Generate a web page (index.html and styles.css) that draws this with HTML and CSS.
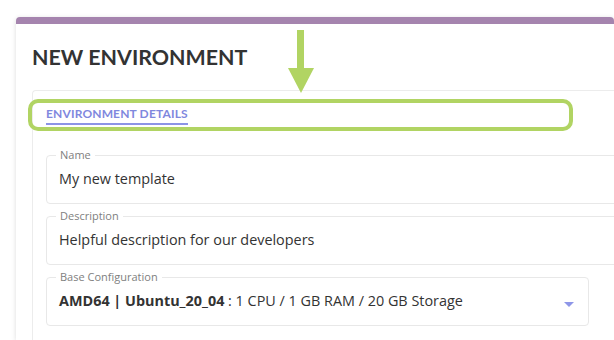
FILE: index.html
```html
<!DOCTYPE html>
<html lang="en">
<head>
  <meta charset="UTF-8" />
  <meta name="viewport" content="width=device-width, initial-scale=1.0"/>
  <title>New Environment</title>
  <link rel="stylesheet" href="styles.css">
</head>
<body>
  <div class="card">
    <h1>NEW ENVIRONMENT</h1>

    <div class="panel">
      <div class="tabs">
        <span class="tab active">ENVIRONMENT DETAILS</span>
      </div>

      <fieldset class="field">
        <legend>Name</legend>
        <div class="value">My new template</div>
      </fieldset>

      <fieldset class="field">
        <legend>Description</legend>
        <div class="value">Helpful description for our developers</div>
      </fieldset>

      <fieldset class="field select">
        <legend>Base Configuration</legend>
        <div class="value"><b>AMD64 | Ubuntu_20_04</b> : 1 CPU / 1 GB RAM / 20 GB Storage</div>
        <span class="caret"></span>
      </fieldset>
    </div>

    <!-- annotation overlay -->
    <div class="highlight"></div>
    <svg class="pointer" width="28" height="64" viewBox="0 0 28 64">
      <rect x="10" y="0" width="7" height="40" fill="#b1d463"/>
      <polygon points="1,38 27,38 14,63" fill="#b1d463"/>
    </svg>
  </div>
</body>
</html>
```

FILE: styles.css
```css
body {
  margin: 0;
  padding: 17px 0 0 16px;
  background: #fff;
  overflow: hidden;
  font-family: 'Open Sans', sans-serif;
  color: #333;
}

.card {
  position: relative;
  width: 598px;
  height: 323px;
  overflow: hidden;
  border-top: 7px solid #a584ae;
  border-radius: 4px 4px 0 0;
  background: #fff;
  box-shadow: 0 1px 5px rgba(0, 0, 0, 0.14);
  padding: 0 0 0 16px;
  box-sizing: border-box;
}

h1 {
  margin: 0;
  padding-top: 20px;
  height: 46px;
  box-sizing: content-box;
  font-family: 'Lato', sans-serif;
  font-size: 21.4px;
  line-height: 26px;
  font-weight: 700;
  letter-spacing: 0;
  color: #333;
}

.panel {
  border: 1px solid #ececec;
  border-right: none;
  border-radius: 4px 0 0 0;
  padding: 0 0 20px 13px;
  margin-right: -30px;
}

.tabs {
  padding-top: 10px;
  height: 47px;
}

.tab {
  display: inline-block;
  font-family: 'Lato', sans-serif;
  font-size: 12px;
  line-height: 16px;
  font-weight: 700;
  letter-spacing: 0.15px;
  color: #7f88de;
  padding-bottom: 1px;
  border-bottom: 2px solid #8c94e6;
}

.field {
  position: relative;
  margin: 0 0 5px;
  padding: 0 12px 0 9px;
  border: 1px solid #e8e8e8;
  border-radius: 4px;
  min-width: 0;
}

.field legend {
  padding: 0 4px;
  font-size: 11px;
  line-height: 14px;
  color: #808080;
}

.value {
  padding: 7px 0 14px 3px;
  font-size: 14.4px;
  line-height: 20px;
  color: #333;
}

.value b {
  font-weight: 700;
}

.select {
  width: 520px;
}

.caret {
  position: absolute;
  right: 14px;
  top: 18px;
  width: 0;
  height: 0;
  border-left: 5px solid transparent;
  border-right: 5px solid transparent;
  border-top: 5px solid #8e96e8;
}

.highlight {
  position: absolute;
  left: 12px;
  top: 75px;
  width: 537px;
  height: 24px;
  border: 4px solid #b1d463;
  border-radius: 10px;
}

.pointer {
  position: absolute;
  left: 271px;
  top: 6px;
}
```
